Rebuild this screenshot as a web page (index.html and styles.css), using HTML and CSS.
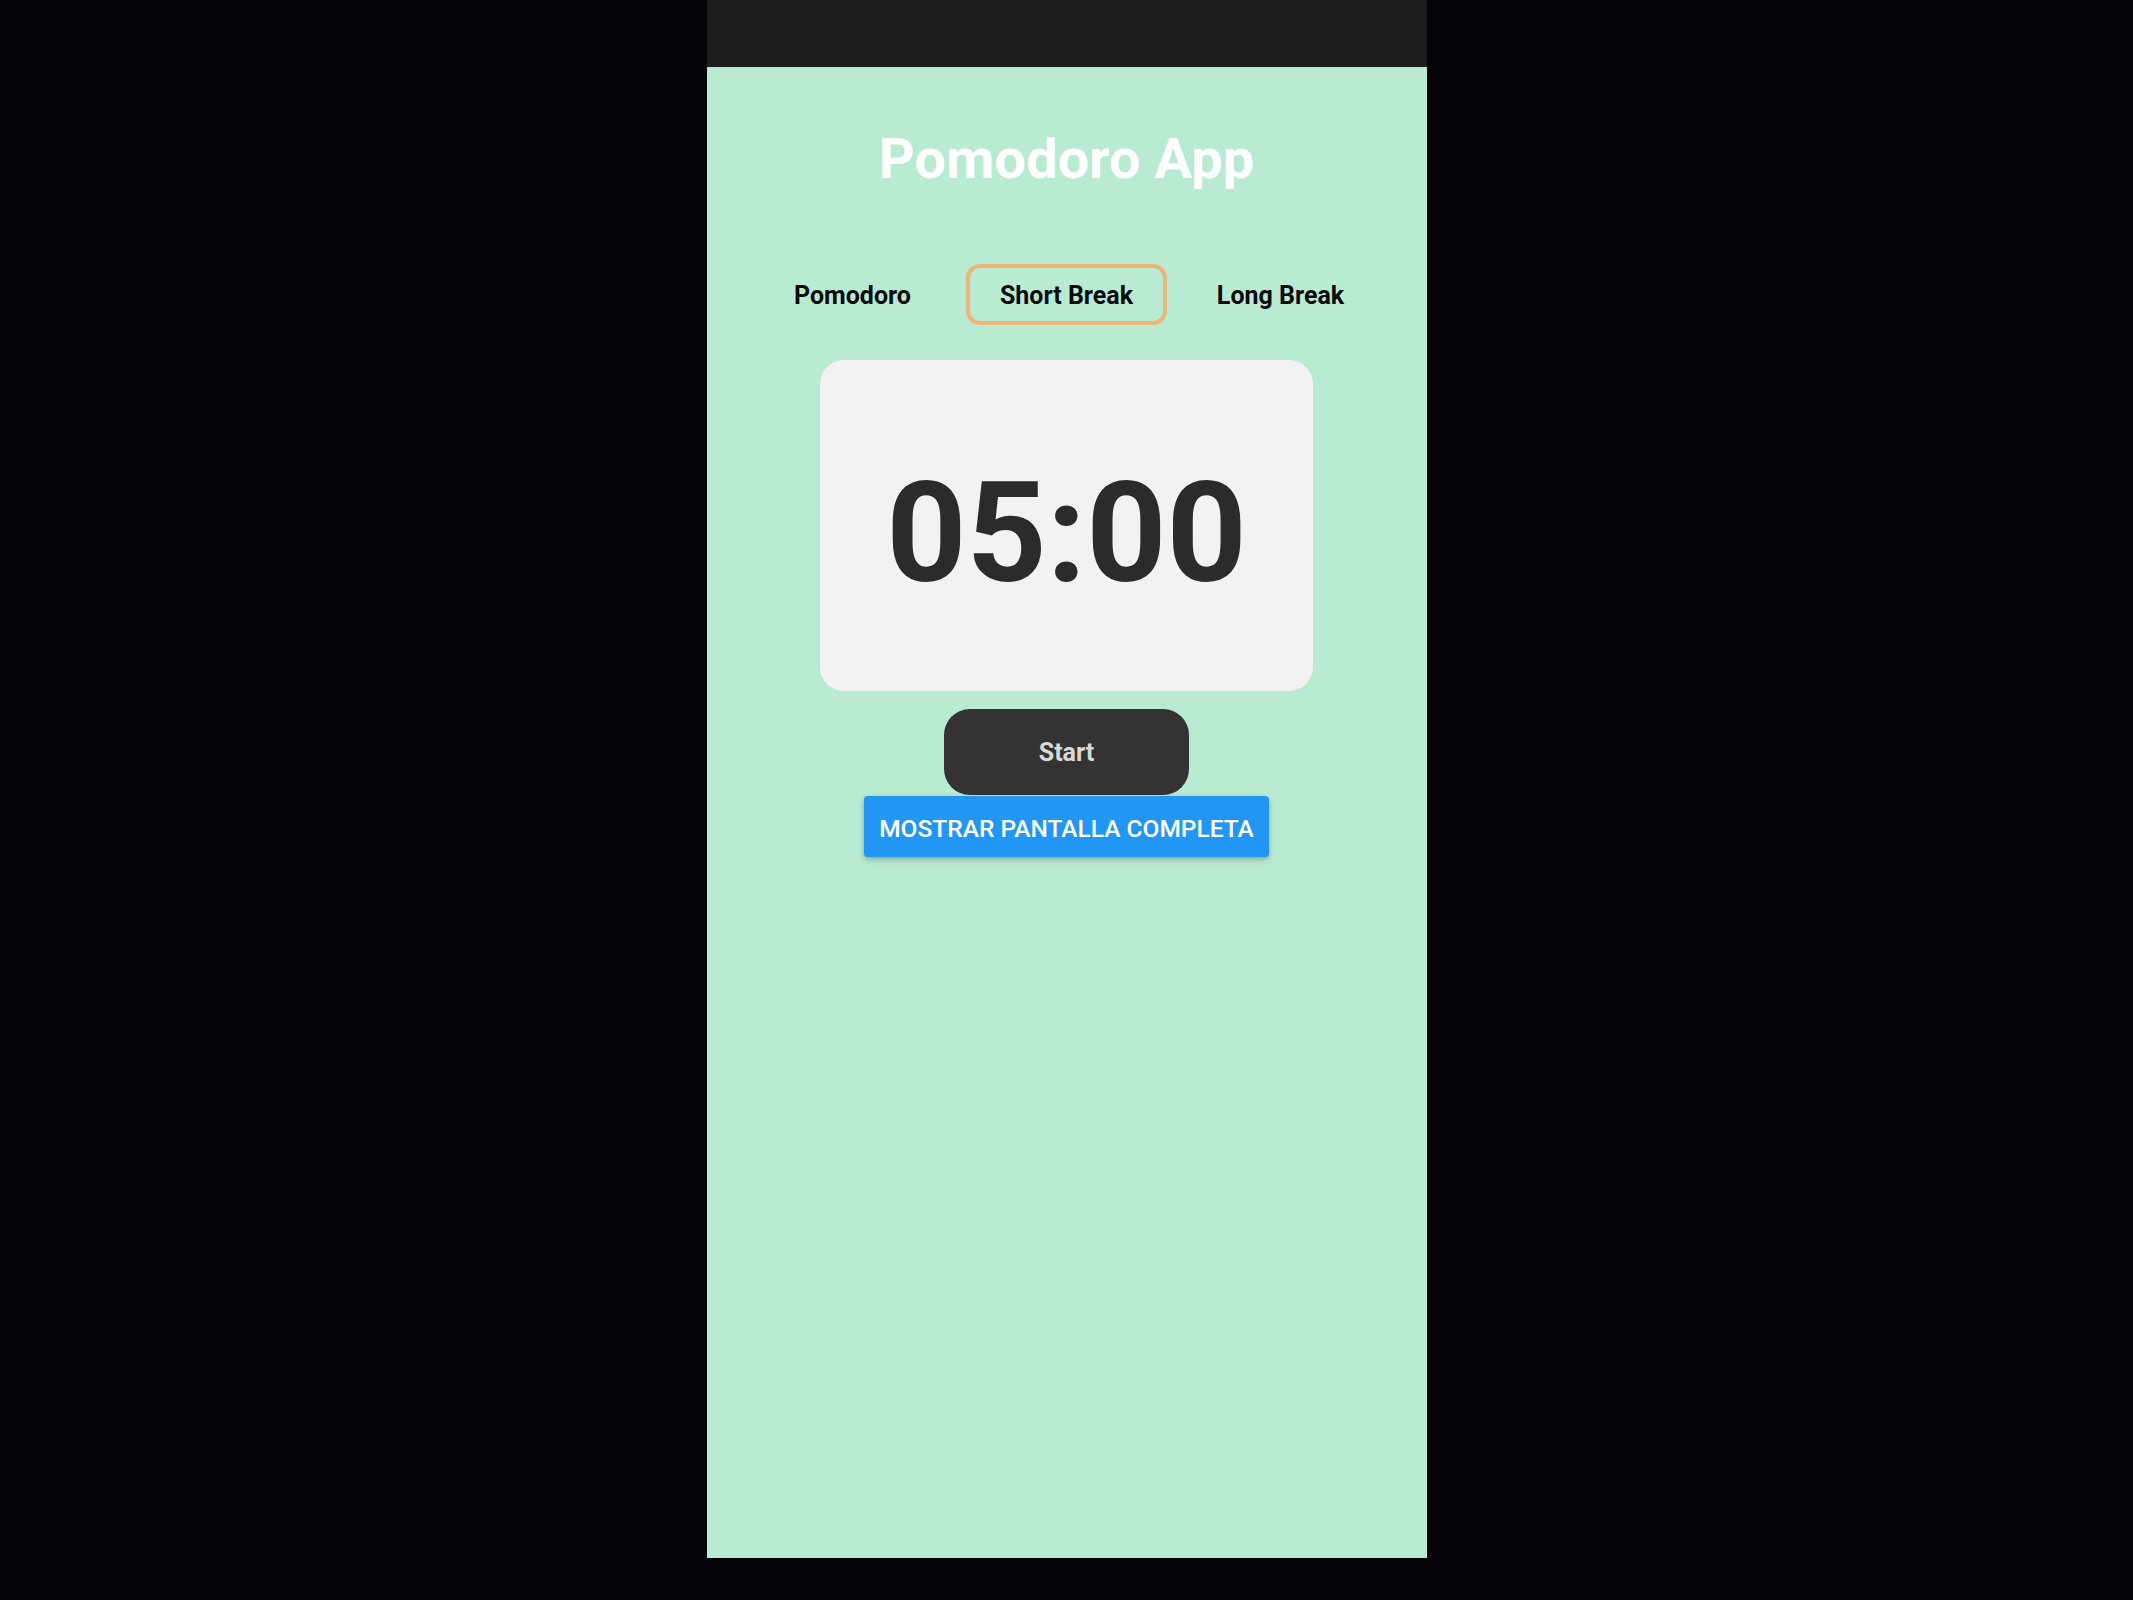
FILE: index.html
```html
<!DOCTYPE html>
<html lang="es">
<head>
<meta charset="utf-8">
<title>Pomodoro App</title>
<link rel="stylesheet" href="styles.css">
</head>
<body>
<div class="phone">
  <div class="status-bar"></div>
  <main class="app">
    <h1 class="title">Pomodoro App</h1>
    <nav class="tabs">
      <div class="tab-cell"><button class="tab">Pomodoro</button></div>
      <div class="tab-cell"><button class="tab active">Short Break</button></div>
      <div class="tab-cell"><button class="tab">Long Break</button></div>
    </nav>
    <div class="timer-card"><span class="time">05:00</span></div>
    <button class="start-btn">Start</button>
    <button class="fullscreen-btn">Mostrar pantalla completa</button>
  </main>
</div>
</body>
</html>
```
FILE: styles.css
```css
html, body {
  margin: 0;
  padding: 0;
  background: #050308;
}
body {
  font-family: Roboto, "Noto Sans", "Liberation Sans", sans-serif;
}
.phone {
  width: 720px;
  height: 1558px;
  margin: 0 auto;
  display: flex;
  flex-direction: column;
  background: #b9ebd2;
}
.status-bar {
  height: 67px;
  background: #1e1e1e;
  flex: none;
}
.app {
  flex: 1;
  display: flex;
  flex-direction: column;
  align-items: center;
}
.title {
  margin: 64px 0 0;
  font-size: 56px;
  line-height: 1;
  font-weight: 700;
  color: #ffffff;
}
.tabs {
  margin-top: 77px;
  display: grid;
  grid-template-columns: repeat(3, 214px);
}
.tab-cell {
  display: flex;
  justify-content: center;
}
.tab {
  font-family: inherit;
  font-size: 25px;
  font-weight: 700;
  line-height: 29px;
  color: #0a0a0a;
  background: transparent;
  border: 4px solid transparent;
  border-radius: 14px;
  padding: 13px 30px 11px;
  cursor: pointer;
}
.tab.active {
  border-color: #eeb57b;
}
.timer-card {
  margin-top: 35px;
  width: 493px;
  height: 331px;
  box-sizing: border-box;
  padding-top: 15px;
  background: #f2f2f2;
  border-radius: 24px;
  display: flex;
  align-items: center;
  justify-content: center;
}
.time {
  font-size: 140px;
  line-height: 1;
  font-weight: 700;
  color: #2d2a2a;
}
.start-btn {
  margin-top: 18px;
  width: 245px;
  height: 86px;
  border: none;
  border-radius: 26px;
  background: #333333;
  color: #dcd8d8;
  font-family: inherit;
  font-size: 25px;
  font-weight: 700;
  cursor: pointer;
}
.fullscreen-btn {
  margin-top: 1px;
  width: 405px;
  height: 61px;
  padding: 3px 0 0;
  border: none;
  border-radius: 4px;
  background: #2196f3;
  color: #ffffff;
  font-family: inherit;
  font-size: 24.5px;
  font-weight: 500;
  text-transform: uppercase;
  box-shadow: 0 3px 6px rgba(0, 0, 0, 0.2), 0 1px 3px rgba(0, 0, 0, 0.15);
  cursor: pointer;
}
```
